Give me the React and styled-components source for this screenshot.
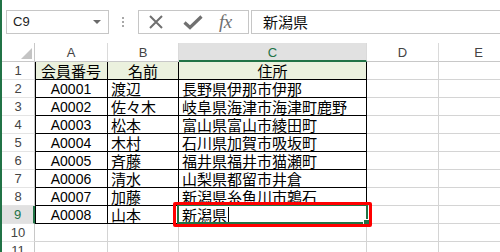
import React from "react";
import styled, { createGlobalStyle, css } from "styled-components";

const GlobalStyle = createGlobalStyle`
  html, body { margin: 0; padding: 0; background: #ffffff; }
  body { font-family: "Liberation Sans", "Noto Sans CJK JP", sans-serif; overflow: hidden; }
  * { box-sizing: border-box; }
`;

const GREEN = "#217346";
const GRID = "#d4d4d4";
const JP = `"Noto Sans CJK JP", "Liberation Sans", sans-serif`;

const Window = styled.div`
  width: 500px;
  height: 252px;
  border-left: 2px solid ${GREEN};
  display: flex;
  flex-direction: column;
  overflow: hidden;
  background: #fff;
`;

const FormulaBar = styled.div`
  height: 43px;
  flex: none;
  display: flex;
  align-items: flex-start;
  padding: 10px 0 0 4px;
`;

const Box = styled.div`
  height: 24px;
  border: 1px solid #c6c6c6;
  background: #fff;
  display: flex;
  align-items: center;
  flex: none;
  line-height: 16px;
`;

const NameBox = styled(Box)`
  width: 103px;
  padding: 0 6px 0 6px;
  justify-content: space-between;
  font-family: "Liberation Sans", sans-serif;
  font-size: 13px;
  color: #222;
`;

const Caret = styled.span`
  width: 0;
  height: 0;
  border-left: 4px solid transparent;
  border-right: 4px solid transparent;
  border-top: 4px solid #6a6a6a;
  margin-right: 1px;
`;

const Grip = styled.div`
  width: 29px;
  height: 24px;
  flex: none;
  display: flex;
  flex-direction: column;
  align-items: center;
  justify-content: center;
  gap: 2px;
  padding-right: 2px;
`;

const Dot = styled.span`
  width: 2px;
  height: 2px;
  background: #a8a8a8;
`;

const FxBox = styled(Box)`
  width: 111px;
  padding-left: 9px;
`;

const IconSlot = styled.span`
  display: flex;
  align-items: center;
  justify-content: center;
  width: ${(p) => p.$w}px;
  margin-right: ${(p) => p.$gap}px;
`;

const FxText = styled.span`
  font-family: "Liberation Serif", serif;
  font-style: italic;
  font-size: 19px;
  color: #707070;
  letter-spacing: -0.5px;
  line-height: 1;
  margin-top: -2px;
`;

const FormulaInput = styled(Box)`
  width: 270px;
  margin-left: 2px;
  padding-left: 11px;
  font-family: ${JP};
  font-size: 15px;
  color: #111;
`;

const Sheet = styled.div`
  display: grid;
  grid-template-columns: 33px 73px 71px 188px 72px 80px;
  grid-auto-rows: 18px;
  grid-template-rows: 19px;
`;

const Corner = styled.div`
  position: relative;
  border-right: 1px solid #c8c8c8;
  border-bottom: 1px solid #c8c8c8;
  &::after {
    content: "";
    position: absolute;
    right: 2px;
    bottom: 2px;
    width: 0;
    height: 0;
    border-left: 11px solid transparent;
    border-bottom: 11px solid #c4c4c4;
  }
`;

const ColHead = styled.div`
  display: flex;
  align-items: center;
  justify-content: center;
  font-family: "Liberation Sans", sans-serif;
  font-size: 13px;
  line-height: 15px;
  color: #444;
  border-right: 1px solid #dadada;
  border-bottom: 1px solid #c8c8c8;
  padding-top: 1px;
  ${(p) =>
    p.$active &&
    css`
      background: #e1e1e1;
      color: ${GREEN};
      border-bottom: 2px solid ${GREEN};
    `}
`;

const RowHead = styled.div`
  display: flex;
  align-items: center;
  justify-content: center;
  overflow: hidden;
  font-family: "Liberation Sans", sans-serif;
  font-size: 13px;
  line-height: 15px;
  color: #444;
  border-right: 1px solid #c8c8c8;
  border-bottom: 1px solid #e4e4e4;
  ${(p) =>
    p.$active &&
    css`
      background: #e1e1e1;
      color: ${GREEN};
      border-right: 2px solid ${GREEN};
    `}
`;

const Cell = styled.div`
  position: relative;
  display: flex;
  align-items: center;
  justify-content: ${(p) => (p.$align === "center" ? "center" : "flex-start")};
  padding-left: ${(p) => (p.$align === "center" ? 0 : 3)}px;
  font-family: ${(p) => (p.$latin ? `"Liberation Sans", sans-serif` : JP)};
  font-size: ${(p) => (p.$latin ? 14 : 15)}px;
  line-height: 16px;
  color: #000;
  white-space: nowrap;
  background: ${(p) => p.$bg || "transparent"};
  border-right: 1px solid ${(p) => (p.$table ? "#000" : GRID)};
  border-bottom: 1px solid ${(p) => (p.$table ? "#000" : GRID)};
  ${(p) => p.$first && css`box-shadow: inset 1px 0 0 #000;`}
`;

const TextCursor = styled.span`
  display: inline-block;
  width: 1px;
  height: 15px;
  background: #000;
  margin-left: 1px;
`;

const Selection = styled.div`
  position: absolute;
  left: -2px;
  top: -2px;
  right: -2px;
  bottom: -1px;
  border: 2px solid ${GREEN};
  pointer-events: none;
  z-index: 2;
  &::after {
    content: "";
    position: absolute;
    right: -3px;
    bottom: -3px;
    width: 5px;
    height: 5px;
    background: ${GREEN};
    border-left: 1px solid #fff;
    border-top: 1px solid #fff;
  }
`;

const Highlight = styled.div`
  position: absolute;
  left: -6px;
  top: -4px;
  right: -6px;
  bottom: -4px;
  border: 3px solid #ff0000;
  border-radius: 2px;
  pointer-events: none;
  z-index: 3;
`;

const rows = [
  ["会員番号", "名前", "住所"],
  ["A0001", "渡辺", "長野県伊那市伊那"],
  ["A0002", "佐々木", "岐阜県海津市海津町鹿野"],
  ["A0003", "松本", "富山県富山市綾田町"],
  ["A0004", "木村", "石川県加賀市吸坂町"],
  ["A0005", "斉藤", "福井県福井市猫瀬町"],
  ["A0006", "清水", "山梨県都留市井倉"],
  ["A0007", "加藤", "新潟県糸魚川市鶉石"],
  ["A0008", "山本", "新潟県"],
];

const cols = ["A", "B", "C", "D", "E"];

export default function App() {
  const body = [];
  for (let r = 1; r <= 11; r++) {
    const data = rows[r - 1];
    const active = r === 9;
    body.push(
      <RowHead key={`h${r}`} $active={active}>
        {r}
      </RowHead>
    );
    if (data) {
      const isHeader = r === 1;
      const bg = isHeader ? "#ebf1de" : undefined;
      body.push(
        <Cell key={`a${r}`} $table $first $bg={bg} $align="center" $latin={!isHeader}>
          {data[0]}
        </Cell>
      );
      body.push(
        <Cell key={`b${r}`} $table $bg={bg} $align={isHeader ? "center" : "left"}>
          {data[1]}
        </Cell>
      );
      body.push(
        <Cell key={`c${r}`} $table $bg={bg} $align={isHeader ? "center" : "left"}>
          {data[2]}
          {active && <TextCursor />}
          {active && <Selection />}
          {active && <Highlight />}
        </Cell>
      );
    } else {
      body.push(<Cell key={`a${r}`} />);
      body.push(<Cell key={`b${r}`} />);
      body.push(<Cell key={`c${r}`} />);
    }
    body.push(<Cell key={`d${r}`} />);
    body.push(<Cell key={`e${r}`} />);
  }

  return (
    <>
      <GlobalStyle />
      <Window>
        <FormulaBar>
          <NameBox>
            <span>C9</span>
            <Caret />
          </NameBox>
          <Grip>
            <Dot />
            <Dot />
            <Dot />
          </Grip>
          <FxBox>
            <IconSlot $w={16} $gap={19}>
              <svg width="16" height="16" viewBox="0 0 16 16">
                <path d="M2 2 L14 14 M14 2 L2 14" stroke="#707070" strokeWidth="2" fill="none" />
              </svg>
            </IconSlot>
            <IconSlot $w={20} $gap={16}>
              <svg width="20" height="16" viewBox="0 0 20 16">
                <path d="M1.5 8.5 L7 13.5 L18.5 2.5" stroke="#707070" strokeWidth="3.2" fill="none" strokeLinejoin="miter" />
              </svg>
            </IconSlot>
            <FxText>fx</FxText>
          </FxBox>
          <FormulaInput>新潟県</FormulaInput>
        </FormulaBar>
        <Sheet>
          <Corner />
          {cols.map((c) => (
            <ColHead key={c} $active={c === "C"}>
              {c}
            </ColHead>
          ))}
          {body}
        </Sheet>
      </Window>
    </>
  );
}
